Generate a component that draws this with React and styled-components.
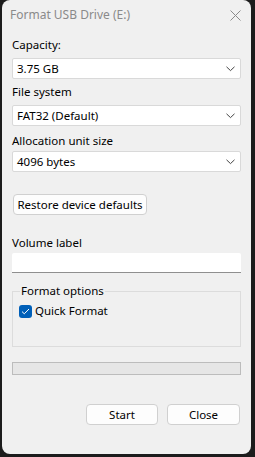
import React from 'react';
import styled, { createGlobalStyle } from 'styled-components';

const Global = createGlobalStyle`
  html, body {
    margin: 0;
    padding: 0;
    background: #1c1c1c;
    width: 255px;
    height: 457px;
    overflow: hidden;
  }
  * { box-sizing: border-box; }
`;

const Window = styled.div`
  margin: 0 4px 0 2px;
  width: 249px;
  height: 454px;
  background: #f0f0f0;
  border-radius: 8px;
  font-family: 'Noto Sans', 'Open Sans', sans-serif;
  font-size: 11.5px;
  line-height: 16px;
  color: #000;
  display: flex;
  flex-direction: column;
`;

const TitleBar = styled.div`
  height: 30px;
  display: flex;
  align-items: center;
  justify-content: space-between;
  padding: 0 10px 0 8px;
  color: #8a8a8a;
  font-size: 12px;
`;

const Body = styled.div`
  padding: 7px 10px 0 10px;
  display: flex;
  flex-direction: column;
`;

const Label = styled.div`
  height: 16px;
  margin-top: ${(p) => p.$top || 0}px;
`;

const Select = styled.div`
  margin-top: ${(p) => p.$top || 5}px;
  height: 21px;
  background: #fff;
  border: 1px solid #d9d9d9;
  border-radius: 2px;
  display: flex;
  align-items: center;
  justify-content: space-between;
  padding: 0 5px 0 4px;
`;

const Button = styled.button`
  font: inherit;
  color: #000;
  height: 21px;
  width: ${(p) => p.$w}px;
  background: #fdfdfd;
  border: 1px solid #d0d0d0;
  border-radius: 4px;
  padding: 0;
  display: flex;
  align-items: center;
  justify-content: center;
`;

const Restore = styled.div`
  margin-top: 22px;
  padding-left: 1px;
`;

const TextInput = styled.div`
  margin-top: 2px;
  height: 20px;
  background: #fff;
  border-bottom: 1px solid #8f8f8f;
  border-radius: 2px 2px 0 0;
`;

const Group = styled.fieldset`
  margin: 11px 0 0 0;
  height: 63px;
  border: 1px solid #dcdcdc;
  padding: 4px 6px 0 6px;
  min-width: 0;
`;

const Legend = styled.legend`
  padding: 0 1px;
  margin-left: 1px;
  line-height: 14px;
`;

const CheckRow = styled.div`
  display: flex;
  align-items: center;
  gap: 3px;
  margin-top: 1px;
`;

const Box = styled.span`
  width: 13px;
  height: 13px;
  border-radius: 3px;
  background: #005fb8;
  display: flex;
  align-items: center;
  justify-content: center;
`;

const Progress = styled.div`
  margin-top: 15px;
  height: 13px;
  background: #e6e6e6;
  border: 1px solid #bcbcbc;
`;

const Footer = styled.div`
  margin-top: 29px;
  display: flex;
  justify-content: flex-end;
  gap: 9px;
  padding-right: 1px;
`;

const Chevron = () => (
  <svg width="9" height="6" viewBox="0 0 9 6">
    <path d="M0.5 0.8 L4.5 4.6 L8.5 0.8" fill="none" stroke="#444" strokeWidth="1" />
  </svg>
);

const CloseIcon = () => (
  <svg width="11" height="11" viewBox="0 0 11 11">
    <path d="M0.5 0.5 L10.5 10.5 M10.5 0.5 L0.5 10.5" stroke="#8a8a8a" strokeWidth="1" />
  </svg>
);

function Dropdown({ value, top }) {
  return (
    <Select $top={top}>
      <span>{value}</span>
      <Chevron />
    </Select>
  );
}

export default function App() {
  return (
    <>
      <Global />
      <Window>
        <TitleBar>
          <span>Format USB Drive (E:)</span>
          <CloseIcon />
        </TitleBar>
        <Body>
          <Label>Capacity:</Label>
          <Dropdown value="3.75 GB" />
          <Label $top={5}>File system</Label>
          <Dropdown value="FAT32 (Default)" />
          <Label $top={7}>Allocation unit size</Label>
          <Dropdown value="4096 bytes" top={2} />
          <Restore>
            <Button $w={134}>Restore device defaults</Button>
          </Restore>
          <Label $top={20}>Volume label</Label>
          <TextInput />
          <Group>
            <Legend>Format options</Legend>
            <CheckRow>
              <Box>
                <svg width="9" height="7" viewBox="0 0 9 7">
                  <path d="M1 3.6 L3.3 5.8 L8 1" fill="none" stroke="#fff" strokeWidth="1" />
                </svg>
              </Box>
              <span>Quick Format</span>
            </CheckRow>
          </Group>
          <Progress />
          <Footer>
            <Button $w={72}>Start</Button>
            <Button $w={73}>Close</Button>
          </Footer>
        </Body>
      </Window>
    </>
  );
}
